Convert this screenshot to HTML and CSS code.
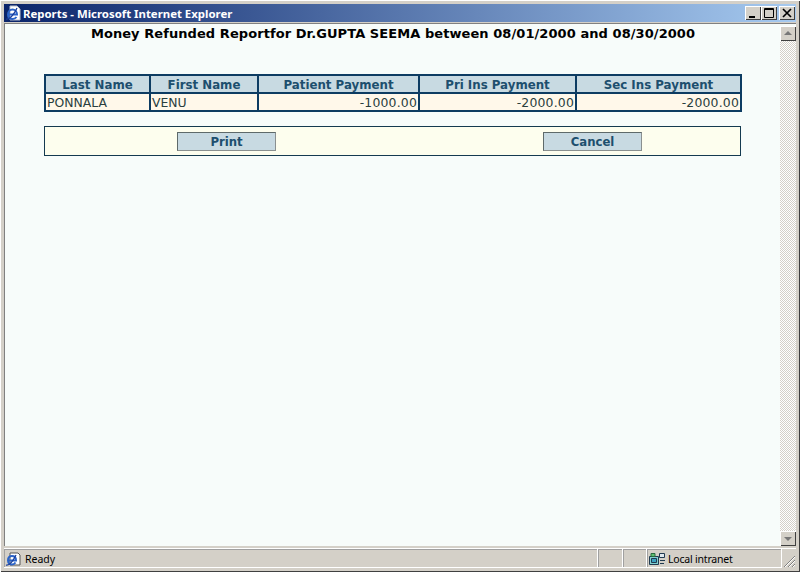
FILE: index.html
```html
<!DOCTYPE html>
<html lang="en">
<head>
<meta charset="utf-8">
<title>Reports - Microsoft Internet Explorer</title>
<link rel="stylesheet" href="styles.css">
</head>
<body>
<div class="window">
  <header class="titlebar">
    <svg class="ie-icon" width="16" height="16" viewBox="0 0 16 16"><path d="M5 1h7l3 3v11H5z" fill="#fff" stroke="#b8c0d0"/><path d="M3.500 9.500h8.500c0-3-2-5-4.500-5s-4.500 2-4.500 5 2 4.500 4.500 4.500c1.500 0 3-.7 4-2" fill="none" stroke="#2a63c8" stroke-width="2"/><path d="M1 14c3 1 8-4 11-11" fill="none" stroke="#1b3f9c" stroke-width="1.300"/></svg>
    <span class="title-text">Reports - Microsoft Internet Explorer</span>
    <div class="win-buttons">
      <button class="win-btn"><svg width="16" height="14" viewBox="0 0 16 14"><path d="M4 10h6v2H4z" fill="#000"/></svg></button>
      <button class="win-btn"><svg width="16" height="14" viewBox="0 0 16 14"><path d="M3.500 2.500h9v9h-9z M3 3.500h10" fill="none" stroke="#000"/></svg></button>
      <button class="win-btn win-close"><svg width="16" height="14" viewBox="0 0 16 14"><path d="M4 3l8 8M12 3l-8 8" fill="none" stroke="#000" stroke-width="1.700"/></svg></button>
    </div>
  </header>
  <div class="body-row">
    <main class="content">
      <h1 class="report-title">Money Refunded Reportfor Dr.GUPTA SEEMA between 08/01/2000 and 08/30/2000</h1>
      <table class="report">
        <colgroup>
          <col class="c1"><col class="c2"><col class="c3"><col class="c4"><col class="c5">
        </colgroup>
        <thead>
          <tr><th>Last Name</th><th>First Name</th><th>Patient Payment</th><th>Pri Ins Payment</th><th>Sec Ins Payment</th></tr>
        </thead>
        <tbody>
          <tr><td>PONNALA</td><td>VENU</td><td class="num">-1000.00</td><td class="num">-2000.00</td><td class="num">-2000.00</td></tr>
        </tbody>
      </table>
      <div class="actions">
        <button class="action">Print</button>
        <button class="action">Cancel</button>
      </div>
    </main>
    <aside class="scrollbar">
      <div class="sb-btn"><svg width="16" height="15" viewBox="0 0 16 15"><path d="M8 5l4 4H4z" fill="#777"/></svg></div>
      <div class="sb-track"></div>
      <div class="sb-btn"><svg width="16" height="15" viewBox="0 0 16 15"><path d="M8 10l4-4H4z" fill="#777"/></svg></div>
    </aside>
  </div>
  <footer class="statusbar">
    <div class="st st-main">
      <svg width="16" height="16" viewBox="0 0 16 16"><path d="M5 2h8l2 2v10H5z" fill="#fff" stroke="#555"/><path d="M3.500 9.500h7.500c0-3-1.500-4.500-4-4.500s-4 2-4 4.500 2 4 4 4c1.500 0 2.500-.5 3.500-2" fill="none" stroke="#2a63c8" stroke-width="2"/><path d="M1 14c3 1 7-4 10-10" fill="none" stroke="#1b3f9c" stroke-width="1.300"/></svg>
      <span>Ready</span>
    </div>
    <div class="st st-a"></div>
    <div class="st st-b"></div>
    <div class="st st-zone">
      <svg width="18" height="16" viewBox="0 0 18 16"><path d="M1.500 5.500h9v8h-9z" fill="#7fd0d0" stroke="#203a50"/><path d="M3.500 7.500h5v4h-5z" fill="#3aa0c0" stroke="#203a50"/><path d="M3 2.500h4v3h-4z" fill="#5cc070" stroke="#2a6a40"/><path d="M11.500 2.500h5v4h-5z M12 9.500h5 M12 12.500h4" fill="#dfe8ee" stroke="#203a50"/></svg>
      <span>Local intranet</span>
    </div>
    <div class="grip"><svg width="14" height="14" viewBox="0 0 14 14"><path d="M13 2L2 13M13 6L6 13M13 10l-3 3" stroke="#808080" fill="none"/><path d="M13 3L3 13M13 7l-6 6M13 11l-2 2" stroke="#fff" fill="none"/></svg></div>
  </footer>
</div>
</body>
</html>
```
FILE: styles.css
```css
* { box-sizing: border-box; }
html, body { margin: 0; padding: 0; }
body { background: #d4d0c8; overflow: hidden; }

.window {
  width: 800px;
  height: 572px;
  display: flex;
  flex-direction: column;
  padding: 4px 4px 4px 4px;
  background: #d4d0c8;
  box-shadow: inset 1px 1px 0 #fff, inset -1px -1px 0 #404040;
  font-family: "Liberation Sans", Arial, sans-serif;
}

.titlebar {
  height: 18px;
  flex: none;
  display: flex;
  align-items: center;
  gap: 2px;
  padding: 0 1px 0 1px;
  background: linear-gradient(to right, #0a246a, #a6caf0);
}
.ie-icon { flex: none; }
.title-text {
  flex: 1;
  color: #fff;
  font-family: "Noto Sans", Tahoma, sans-serif;
  font-weight: bold;
  font-size: 11.400px;
}
.win-buttons { display: flex; }
.win-btn {
  width: 16px;
  height: 14px;
  padding: 0;
  margin: 0;
  border: 0;
  display: block;
  background: #d4d0c8;
  box-shadow: inset 1px 1px 0 #fff, inset -1px -1px 0 #404040;
}
.win-btn svg { display: block; }
.win-close { margin-left: 2px; }

.body-row {
  flex: 1;
  min-height: 0;
  display: flex;
  margin-top: 1px;
  padding-left: 1px;
  border-top: 1px solid #808080;
  border-left: 1px solid #808080;
  background: #f7fcfa;
}

.content {
  flex: 1;
  min-width: 0;
  padding: 1px 0 0 38px;
}
.report-title {
  margin: 0 0 30px -38px;
  height: 19px;
  text-align: center;
  color: #000;
  font-family: "DejaVu Sans", Verdana, sans-serif;
  font-weight: bold;
  font-size: 13px;
  line-height: 18px;
  letter-spacing: 0.070px;
}

.report {
  width: 696px;
  table-layout: fixed;
  border-collapse: collapse;
  border: 2px solid #0d3c62;
}
.c1 { width: 105px; }
.c2 { width: 108px; }
.c3 { width: 161px; }
.c4 { width: 157px; }
.c5 { width: 165px; }
.report th, .report td {
  border: 2px solid #0d3c62;
  height: 18px;
  line-height: 14px;
}
.report th {
  padding: 2px 1px 0;
  background: #c8dae2;
  color: #1d4f6e;
  font-family: "DejaVu Sans", Verdana, sans-serif;
  font-size: 11.800px;
  font-weight: bold;
}
.report td {
  padding: 1px 1px 0;
  background: #fff8ea;
  color: #2a3f3f;
  font-family: "DejaVu Sans", Verdana, sans-serif;
  font-size: 12.400px;
}
.report td.num { text-align: right; letter-spacing: 0.200px; }

.actions {
  width: 697px;
  height: 30px;
  margin-top: 14px;
  padding: 5px 0 0 132px;
  display: flex;
  align-items: flex-start;
  gap: 267px;
  background: #fdfeee;
  border: 1px solid #143a50;
}
.action {
  width: 99px;
  height: 19px;
  padding: 0;
  background: #c8dae2;
  color: #1d4f6e;
  font-family: "DejaVu Sans", Verdana, sans-serif;
  font-size: 11.700px;
  font-weight: bold;
  border: 1px solid;
  border-color: #5e6a6a #8a9090 #8a9090 #5e6a6a;
}

.scrollbar {
  width: 16px;
  flex: none;
  display: flex;
  flex-direction: column;
  padding-top: 2px;
}
.sb-btn {
  height: 15px;
  flex: none;
  background: #d4d0c8;
  box-shadow: inset 1px 1px 0 #fff, inset -1px -1px 0 #404040;
}
.sb-btn svg { display: block; }
.sb-track {
  flex: 1;
  background-color: #fff;
  background-image: conic-gradient(#d4d0c8 25%, transparent 0 50%, #d4d0c8 0 75%, transparent 0);
  background-size: 2px 2px;
}

.statusbar {
  height: 20px;
  flex: none;
  display: flex;
  margin-top: 2px;
  color: #000;
  font-family: "Noto Sans", Tahoma, sans-serif;
  background: #d4d0c8;
  border-top: 1px solid #fff;
}
.st {
  display: flex;
  align-items: center;
  font-size: 10.500px;
  box-shadow: inset -1px -1px 0 #fff, inset 1px 1px 0 #a0a0a0;
}
.st-main { width: 594px; gap: 4px; padding-left: 1px; }
.st-a { width: 25px; }
.st-b { width: 24px; }
.st-zone { flex: 1; gap: 2px; padding-left: 1px; letter-spacing: -0.200px; }
.grip { width: 14px; align-self: flex-end; height: 14px; }
.grip svg { display: block; }
```
